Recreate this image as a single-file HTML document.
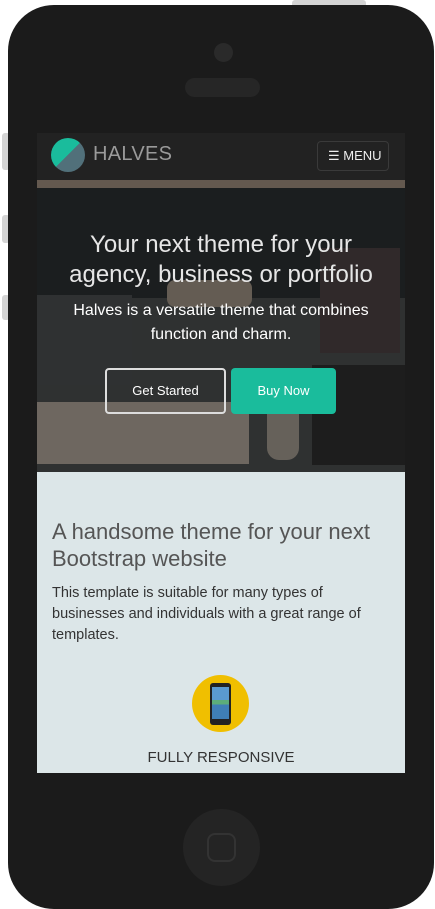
<!DOCTYPE html>
<html><head><meta charset="utf-8"><style>
*{margin:0;padding:0;box-sizing:border-box}
body{width:435px;height:909px;background:#fff;position:relative;overflow:hidden;font-family:"Liberation Sans",sans-serif}
.btn{position:absolute;background:#d4d4d4;border-radius:3px}
.phone{position:absolute;left:8px;top:5px;width:426px;height:904px;background:#1b1b1b;border-radius:46px}
.screen{position:absolute;left:37px;top:133px;width:368px;height:640px;overflow:hidden;background:#dce6e8}
.nav{height:47px;background:#222;position:relative}
.logo{position:absolute;left:14px;top:5px;width:34px;height:34px;border-radius:50%;background:linear-gradient(135deg,#1abc9c 50%,#51707a 50%)}
.brand{position:absolute;left:56px;top:10px;color:#9a9a9a;font-size:20px;letter-spacing:.3px}
.menu{position:absolute;left:280px;top:8px;width:72px;height:30px;border:1px solid #3a3a3a;border-radius:4px;color:#eee;font-size:13px;line-height:28px;padding-left:10px}
.hero{height:292px;position:relative;background:#3a3c3c;overflow:hidden}
.h1{position:absolute;top:50px;left:0;width:368px;text-align:center;color:#e6e6e6;font-size:24px;line-height:30px}
.sub{position:absolute;top:119px;left:0;width:368px;text-align:center;color:#fff;font-size:16px;line-height:24px}
.b1{position:absolute;left:68px;top:188px;width:121px;height:46px;border:2px solid #ddd;border-radius:4px;color:#fff;font-size:13px;text-align:center;line-height:42px}
.b2{position:absolute;left:194px;top:188px;width:105px;height:46px;background:#1abc9c;border-radius:4px;color:#fff;font-size:13px;text-align:center;line-height:46px}
.content{padding:46px 15px 0}
.content h2{font-weight:normal;font-size:22px;line-height:27px;color:#555}
.content p{font-size:14.5px;line-height:21px;color:#333;margin-top:11px;width:320px}
.icon{position:absolute;left:155px;top:542px;width:57px;height:57px;border-radius:50%;background:#f0bf00}
.fr{position:absolute;top:616px;width:368px;text-align:center;font-size:15px;color:#333}
.ov{position:absolute;left:0;top:0;width:368px;height:292px;background:rgba(30,30,30,.35)}
</style></head><body>
<div class="btn" style="left:292px;top:0;width:74px;height:8px"></div>
<div class="btn" style="left:2px;top:133px;width:8px;height:37px"></div>
<div class="btn" style="left:2px;top:215px;width:8px;height:28px"></div>
<div class="btn" style="left:2px;top:295px;width:8px;height:25px"></div>
<div class="phone"></div>
<div style="position:absolute;left:214px;top:43px;width:19px;height:19px;border-radius:50%;background:#2a2a2a"></div>
<div style="position:absolute;left:185px;top:78px;width:75px;height:19px;border-radius:10px;background:#262626"></div>
<div style="position:absolute;left:183px;top:809px;width:77px;height:77px;border-radius:50%;background:#242424"></div>
<div style="position:absolute;left:207px;top:833px;width:29px;height:29px;border-radius:8px;border:2px solid #333"></div>
<div class="screen">
 <div class="nav"><div class="logo"></div><div class="brand">HALVES</div><div class="menu">☰ MENU</div></div>
 <div class="hero">
  <div style="position:absolute;left:0;top:0;width:368px;height:8px;background:#8a7a6a"></div>
  <div style="position:absolute;left:0;top:8px;width:368px;height:110px;background:#1b1f21"></div>
  <div style="position:absolute;left:0;top:115px;width:95px;height:90px;background:#3a3d3e"></div>
  <div style="position:absolute;left:0;top:222px;width:212px;height:62px;background:#9a9084"></div>
  <div style="position:absolute;left:230px;top:220px;width:32px;height:60px;background:#8e867c;border-radius:12px"></div>
  <div style="position:absolute;left:130px;top:100px;width:85px;height:27px;background:#8a7e70;border-radius:8px"></div>
  <div style="position:absolute;left:275px;top:185px;width:93px;height:100px;background:#1e1e1e"></div>
  <div style="position:absolute;left:283px;top:68px;width:80px;height:105px;background:#3b3132"></div>
  <div class="ov"></div>
  <div class="h1">Your next theme for your<br>agency, business or portfolio</div>
  <div class="sub">Halves is a versatile theme that combines<br>function and charm.</div>
  <div class="b1">Get Started</div><div class="b2">Buy Now</div>
 </div>
 <div class="content"><h2>A handsome theme for your next Bootstrap website</h2>
 <p>This template is suitable for many types of businesses and individuals with a great range of templates.</p></div>
 <div class="icon"><div style="position:absolute;left:18px;top:8px;width:21px;height:42px;background:#222;border-radius:3px"><div style="margin:4px 2px;height:32px;background:linear-gradient(#5a9ad0 40%,#5cae7a 40%,#5cae7a 55%,#3f7fb6 55%)"></div></div></div>
 <div class="fr">FULLY RESPONSIVE</div>
</div>
</body></html>
